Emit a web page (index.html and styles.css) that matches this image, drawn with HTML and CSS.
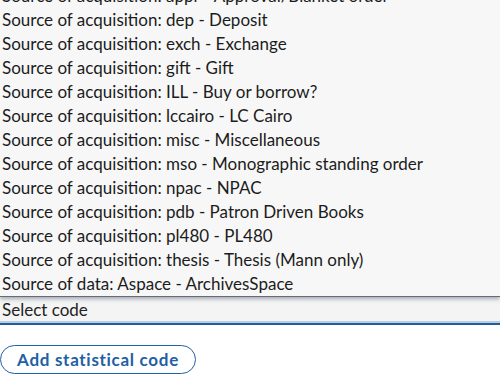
FILE: index.html
```html
<!DOCTYPE html>
<html lang="en">
<head>
<meta charset="utf-8">
<title>Statistical codes</title>
<link rel="stylesheet" href="styles.css">
</head>
<body>
<div class="field">
  <div class="dropdown">
    <ul class="options">
      <li>Source of acquisition: appr - Approval/Blanket order</li>
      <li>Source of acquisition: dep - Deposit</li>
      <li>Source of acquisition: exch - Exchange</li>
      <li>Source of acquisition: gift - Gift</li>
      <li>Source of acquisition: ILL - Buy or borrow?</li>
      <li>Source of acquisition: lccairo - LC Cairo</li>
      <li>Source of acquisition: misc - Miscellaneous</li>
      <li>Source of acquisition: mso - Monographic standing order</li>
      <li>Source of acquisition: npac - NPAC</li>
      <li>Source of acquisition: pdb - Patron Driven Books</li>
      <li>Source of acquisition: pl480 - PL480</li>
      <li>Source of acquisition: thesis - Thesis (Mann only)</li>
      <li>Source of data: Aspace - ArchivesSpace</li>
    </ul>
  </div>
  <div class="select">Select code</div>
</div>
<div class="actions">
  <button class="add-btn" type="button">Add statistical code</button>
</div>
</body>
</html>
```

FILE: styles.css
```css
html, body {
  margin: 0;
  padding: 0;
  background: #fff;
}
body {
  font-family: Lato, "Open Sans", sans-serif;
  font-size: 17px;
  color: #1c1c1c;
  width: 500px;
  height: 379px;
  overflow: hidden;
}
.dropdown {
  height: 296px;
  overflow: hidden;
  background: #f7f7f7;
  border-bottom: 1px solid #6b6b6b;
  box-shadow: 0 2px 4px rgba(60, 80, 110, 0.45);
  position: relative;
  z-index: 1;
}
.options {
  list-style: none;
  margin: -16px 0 0 0;
  padding: 0;
}
.options li {
  height: 24px;
  line-height: 24px;
  padding-left: 2px;
  white-space: nowrap;
}
.select {
  height: 26px;
  line-height: 26px;
  padding-left: 2px;
  background: #f4f4f4;
  border-bottom: 2px solid #1f5fa0;
  box-shadow: inset 0 -2px 0 #b9cde3;
  color: #222;
}
.actions {
  padding-top: 20px;
}
.add-btn {
  font-family: inherit;
  font-size: 17px;
  font-weight: 700;
  letter-spacing: 0.7px;
  color: #2160a3;
  background: #fff;
  border: 1px solid #2160a3;
  border-radius: 16px;
  height: 29px;
  width: 196px;
  padding: 0;
  margin: 0;
  cursor: pointer;
}
```
